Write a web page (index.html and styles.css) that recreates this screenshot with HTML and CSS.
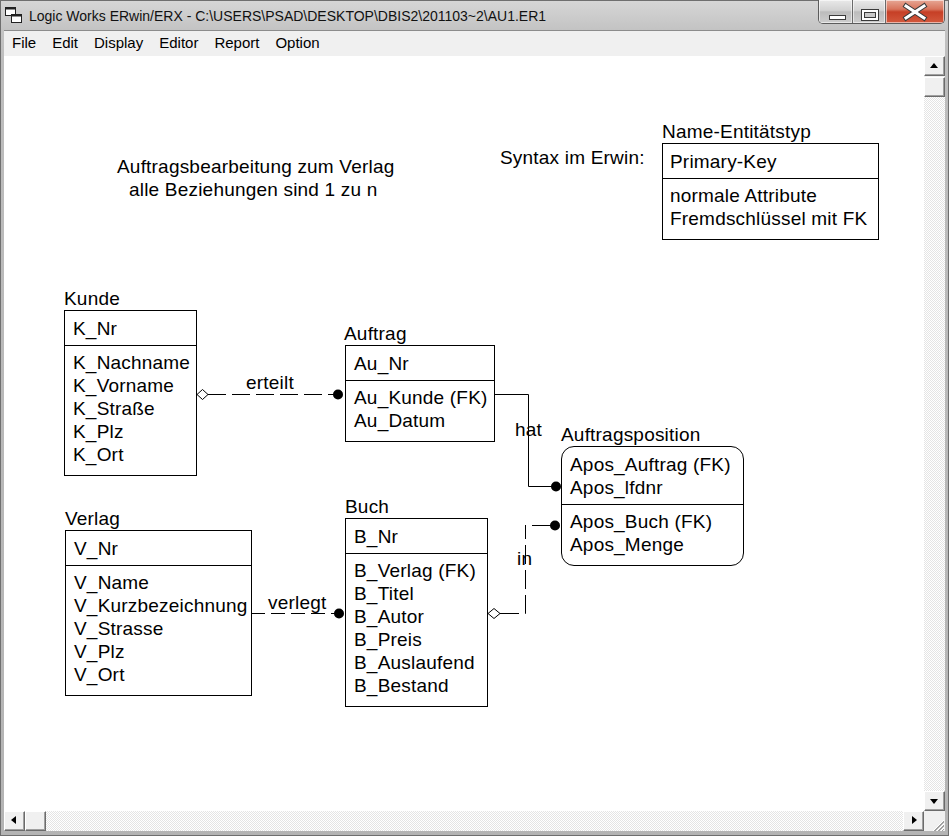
FILE: index.html
```html
<!DOCTYPE html>
<html lang="de">
<head>
<meta charset="utf-8">
<title>Logic Works ERwin/ERX</title>
<link rel="stylesheet" href="styles.css">
</head>
<body>
<div class="window">
  <div class="titlebar">
    <svg class="app-icon" width="17" height="17" viewBox="0 0 17 17">
      <rect x="0.5" y="0.5" width="10" height="8" fill="#fff" stroke="#222"/>
      <rect x="0.5" y="0.5" width="10" height="2" fill="#222"/>
      <rect x="6.5" y="7.5" width="10" height="8" fill="#fff" stroke="#222"/>
      <rect x="6.5" y="7.5" width="10" height="2" fill="#222"/>
    </svg>
    <span class="title">Logic Works ERwin/ERX - C:\USERS\PSAD\DESKTOP\DBIS2\201103~2\AU1.ER1</span>
    <div class="caption-buttons">
      <div class="cbtn cbtn-min">
        <svg width="33" height="22" viewBox="0 0 33 22"><rect x="10.5" y="14.5" width="16" height="4" fill="#fff" stroke="#3a3a3a"/></svg>
      </div>
      <div class="cbtn cbtn-max">
        <svg width="31" height="22" viewBox="0 0 31 22"><rect x="7.5" y="8.5" width="17" height="11" fill="#fff" stroke="#3a3a3a"/><rect x="10.5" y="11.5" width="11" height="5" fill="#c9c9c9" stroke="#3a3a3a"/></svg>
      </div>
      <div class="cbtn cbtn-close">
        <svg width="57" height="22" viewBox="0 0 57 22"><path d="M19 5 L37 17 M37 5 L19 17" stroke="#3a3a3a" stroke-width="5" stroke-linecap="square"/><path d="M19 5 L37 17 M37 5 L19 17" stroke="#fff" stroke-width="3" stroke-linecap="square"/></svg>
      </div>
    </div>
  </div>
  <div class="menubar">
    <span class="menu-item">File</span>
    <span class="menu-item">Edit</span>
    <span class="menu-item">Display</span>
    <span class="menu-item">Editor</span>
    <span class="menu-item">Report</span>
    <span class="menu-item">Option</span>
  </div>
  <div class="client">
    <div class="canvas">
      <svg class="links" width="920" height="755" viewBox="0 0 920 755">
        <g fill="none" stroke="#000" stroke-width="1">
          <line x1="204" y1="338.5" x2="331" y2="338.5" stroke-dasharray="18 6"/>
          <polyline points="490,338.5 524.5,338.5 524.5,430.5 549,430.5"/>
          <line x1="247" y1="557.5" x2="332" y2="557.5" stroke-dasharray="14 6"/>
          <polyline points="496,557.5 521.5,557.5 521.5,469" stroke-dasharray="19 6"/>
          <line x1="528" y1="469.5" x2="548" y2="469.5"/>
        </g>
        <polygon points="193,338.5 198.5,333.5 204,338.5 198.5,343.5" fill="#fff" stroke="#000"/>
        <polygon points="484,557.5 490,552.5 496,557.5 490,562.5" fill="#fff" stroke="#000"/>
        <circle cx="334" cy="338.5" r="5" fill="#000"/>
        <circle cx="552" cy="430.5" r="5" fill="#000"/>
        <circle cx="335" cy="557.5" r="5" fill="#000"/>
        <circle cx="551" cy="469.5" r="5" fill="#000"/>
      </svg>

      <div class="note note-heading">
        <div>Auftragsbearbeitung zum Verlag</div>
        <div class="note-indent">alle Beziehungen sind 1 zu n</div>
      </div>
      <div class="note note-syntax">Syntax im Erwin:</div>

      <div class="rel-label rel-erteilt">erteilt</div>
      <div class="rel-label rel-hat">hat</div>
      <div class="rel-label rel-verlegt">verlegt</div>
      <div class="rel-label rel-in">in</div>

      <div class="entity ent-legend">
        <div class="entity-name">Name-Entitätstyp</div>
        <div class="entity-box">
          <div class="entity-key">Primary-Key</div>
          <div class="entity-attrs">normale Attribute<br>Fremdschlüssel mit FK</div>
        </div>
      </div>

      <div class="entity ent-kunde">
        <div class="entity-name">Kunde</div>
        <div class="entity-box">
          <div class="entity-key">K_Nr</div>
          <div class="entity-attrs">K_Nachname<br>K_Vorname<br>K_Straße<br>K_Plz<br>K_Ort</div>
        </div>
      </div>

      <div class="entity ent-auftrag">
        <div class="entity-name">Auftrag</div>
        <div class="entity-box">
          <div class="entity-key">Au_Nr</div>
          <div class="entity-attrs">Au_Kunde (FK)<br>Au_Datum</div>
        </div>
      </div>

      <div class="entity ent-apos">
        <div class="entity-name">Auftragsposition</div>
        <div class="entity-box entity-box-dependent">
          <div class="entity-key">Apos_Auftrag (FK)<br>Apos_lfdnr</div>
          <div class="entity-attrs">Apos_Buch (FK)<br>Apos_Menge</div>
        </div>
      </div>

      <div class="entity ent-verlag">
        <div class="entity-name">Verlag</div>
        <div class="entity-box">
          <div class="entity-key">V_Nr</div>
          <div class="entity-attrs">V_Name<br>V_Kurzbezeichnung<br>V_Strasse<br>V_Plz<br>V_Ort</div>
        </div>
      </div>

      <div class="entity ent-buch">
        <div class="entity-name">Buch</div>
        <div class="entity-box">
          <div class="entity-key">B_Nr</div>
          <div class="entity-attrs">B_Verlag (FK)<br>B_Titel<br>B_Autor<br>B_Preis<br>B_Auslaufend<br>B_Bestand</div>
        </div>
      </div>
    </div>

    <div class="vscroll">
      <div class="sbtn arrow-up"></div>
      <div class="sbtn thumb"></div>
      <div class="track"></div>
      <div class="sbtn arrow-down"></div>
    </div>

    <div class="hscroll">
      <div class="sbtn arrow-left"></div>
      <div class="sbtn thumb"></div>
      <div class="track"></div>
      <div class="sbtn arrow-right"></div>
    </div>

    <div class="sizegrip">
      <svg width="21" height="20" viewBox="0 0 21 20">
        <g stroke-width="1">
          <line x1="20" y1="9" x2="9" y2="20" stroke="#fff"/>
          <line x1="20" y1="10" x2="10" y2="20" stroke="#a0a0a0"/>
          <line x1="20" y1="11" x2="11" y2="20" stroke="#a0a0a0"/>
          <line x1="20" y1="13" x2="13" y2="20" stroke="#fff"/>
          <line x1="20" y1="14" x2="14" y2="20" stroke="#a0a0a0"/>
          <line x1="20" y1="15" x2="15" y2="20" stroke="#a0a0a0"/>
          <line x1="20" y1="17" x2="17" y2="20" stroke="#fff"/>
          <line x1="20" y1="18" x2="18" y2="20" stroke="#a0a0a0"/>
        </g>
      </svg>
    </div>
  </div>
</div>
</body>
</html>
```

FILE: styles.css
```css
* { box-sizing: border-box; }

html, body {
  margin: 0;
  padding: 0;
  width: 949px;
  height: 836px;
  overflow: hidden;
  background: #fff;
}

.window {
  width: 949px;
  height: 836px;
  border: 1px solid #6f6f6f;
  padding: 0 3px 4px 3px;
  background: linear-gradient(to bottom, #d6d6d6 0px, #c3c3c3 29px, #bdbdbd 60px, #b4b4b4 100%);
  display: flex;
  flex-direction: column;
}

/* ---------- title bar ---------- */
.titlebar {
  height: 29px;
  display: flex;
  align-items: center;
  position: relative;
}

.app-icon {
  margin-left: 1px;
  flex: none;
}

.title {
  margin-left: 7px;
  font-family: "Liberation Sans", Arial, sans-serif;
  font-size: 14px;
  color: #111;
  white-space: nowrap;
  margin-top: 1px;
}

.caption-buttons {
  margin-left: auto;
  align-self: flex-start;
  margin-top: -1px;
  display: flex;
  height: 24px;
  border: 1px solid #5c5c5c;
  border-top: none;
  border-radius: 0 0 5px 5px;
  overflow: hidden;
}

.cbtn {
  height: 23px;
  display: flex;
  align-items: center;
  justify-content: center;
  box-shadow: inset 0 0 0 1px rgba(255,255,255,0.55);
}

.cbtn-min {
  width: 34px;
  background: linear-gradient(to bottom, #e9e9e9 0%, #d2d2d2 45%, #bcbcbc 52%, #cdcdcd 100%);
  border-right: 1px solid #6a6a6a;
}

.cbtn-max {
  width: 33px;
  background: linear-gradient(to bottom, #e9e9e9 0%, #d2d2d2 45%, #bcbcbc 52%, #cdcdcd 100%);
  border-right: 1px solid #6a6a6a;
}

.cbtn-close {
  width: 58px;
  background: linear-gradient(to bottom, #e7a795 0%, #d8745c 40%, #c63f26 52%, #d3593d 100%);
}

/* ---------- menu bar ---------- */
.menubar {
  height: 26px;
  border-top: 1px solid #8c8c8c;
  background: #f0f0f0;
  display: flex;
  align-items: center;
  font-family: "Liberation Sans", Arial, sans-serif;
  font-size: 15px;
  color: #000;
}

.menu-item {
  padding: 0 8px;
  line-height: 20px;
  margin-top: -1px;
}

/* ---------- client area ---------- */
.client {
  display: grid;
  grid-template-columns: 920px 21px;
  grid-template-rows: 755px 20px;
}

.canvas {
  position: relative;
  background: #fff;
  overflow: hidden;
  font-family: "Liberation Sans", Arial, sans-serif;
  font-size: 19px;
  line-height: 23px;
  letter-spacing: 0.2px;
  color: #000;
}

.links {
  position: absolute;
  left: 0;
  top: 0;
}

.note {
  position: absolute;
  white-space: nowrap;
}

.note-heading { left: 113px; top: 99px; }
.note-indent { padding-left: 12px; }
.note-syntax { left: 496px; top: 90px; }

.rel-label {
  position: absolute;
  white-space: nowrap;
}
.rel-erteilt { left: 242px; top: 315px; }
.rel-hat { left: 511px; top: 362px; }
.rel-verlegt { left: 264px; top: 535px; }
.rel-in { left: 513px; top: 491px; }

.entity {
  position: absolute;
  white-space: nowrap;
}

.entity-box {
  border: 1px solid #000;
  background: #fff;
}

.entity-box-dependent {
  border-radius: 13px;
}

.entity-key {
  padding: 6px 8px 5px 8px;
  border-bottom: 1px solid #000;
}

.entity-attrs {
  padding: 5px 8px 9px 8px;
}

.ent-legend { left: 658px; top: 64px; }
.ent-legend .entity-box { width: 217px; }
.ent-legend .entity-key, .ent-legend .entity-attrs { padding-left: 7px; }

.ent-kunde { left: 60px; top: 231px; }
.ent-kunde .entity-box { width: 133px; }

.ent-auftrag { left: 340px; top: 266px; }
.ent-auftrag .entity-box { width: 150px; margin-left: 1px; }

.ent-apos { left: 557px; top: 367px; }
.ent-apos .entity-box { width: 183px; }

.ent-verlag { left: 61px; top: 451px; }
.ent-verlag .entity-box { width: 187px; }

.ent-buch { left: 341px; top: 439px; }
.ent-buch .entity-box { width: 143px; }

/* ---------- scrollbars ---------- */
.sbtn {
  background: #f0f0f0;
  border: 1px solid;
  border-color: #fff #6b6b6b #6b6b6b #fff;
  box-shadow: inset -1px -1px 0 #a0a0a0;
  position: relative;
  flex: none;
}

.track {
  flex: 1;
  background-color: #fff;
  background-image: repeating-conic-gradient(#e4e4e4 0 25%, #ffffff 0 50%);
  background-size: 2px 2px;
}

.vscroll {
  display: flex;
  flex-direction: column;
  background: #f0f0f0;
}
.vscroll .sbtn { height: 20px; width: 21px; }
.vscroll .thumb { margin-top: 1px; }

.hscroll {
  display: flex;
  flex-direction: row;
}
.hscroll .sbtn { width: 21px; height: 20px; }

.arrow-up::before,
.arrow-down::before,
.arrow-left::before,
.arrow-right::before {
  content: "";
  position: absolute;
  width: 0;
  height: 0;
  border-style: solid;
  border-color: transparent;
}

.arrow-up::before {
  left: 5px; top: 6px;
  border-width: 0 4.5px 5px 4.5px;
  border-bottom-color: #000;
}

.arrow-down::before {
  left: 5px; top: 7px;
  border-width: 5px 4.5px 0 4.5px;
  border-top-color: #000;
}

.arrow-left::before {
  left: 6px; top: 4px;
  border-width: 4.5px 5px 4.5px 0;
  border-right-color: #000;
}

.arrow-right::before {
  left: 8px; top: 4px;
  border-width: 4.5px 0 4.5px 5px;
  border-left-color: #000;
}

.sizegrip {
  background: #f0f0f0;
}
.sizegrip svg { display: block; }
```
